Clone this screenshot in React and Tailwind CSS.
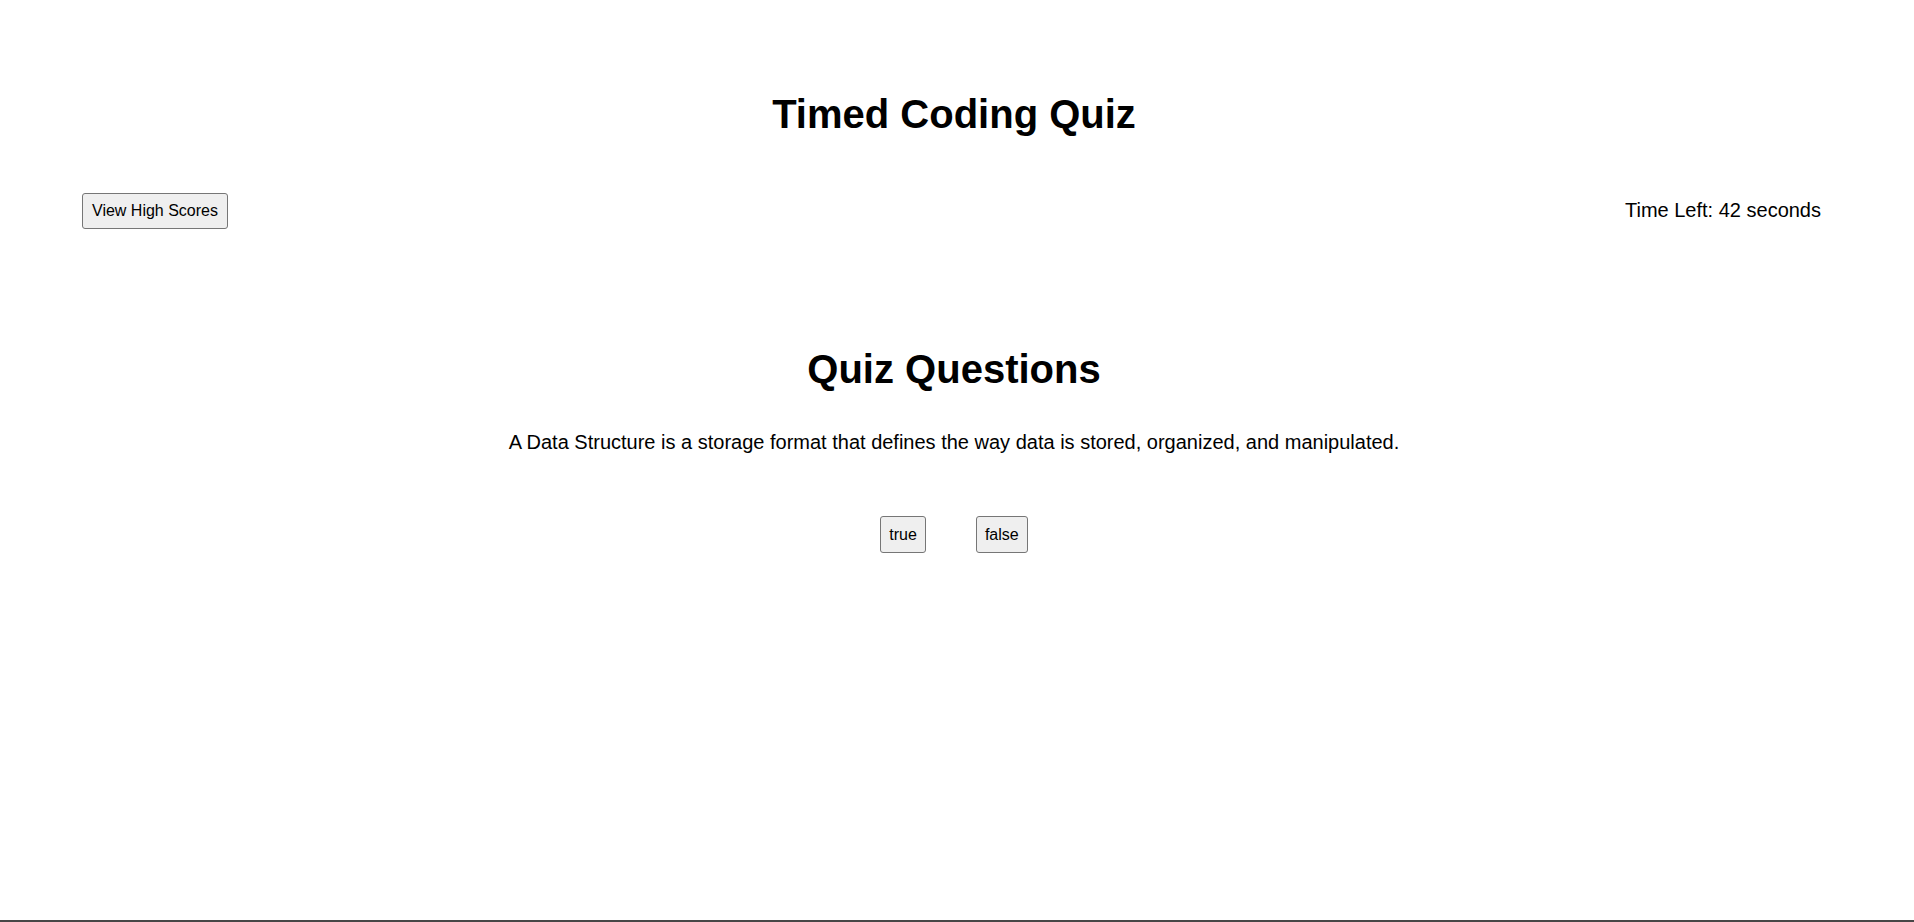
import React from "react";

export default function App() {
  const font = { fontFamily: '"Liberation Sans", Arial, sans-serif' };
  return (
    <div
      className="h-[922px] w-full flex flex-col bg-white text-black font-['Liberation_Sans',Arial,sans-serif]"
      style={font}
    >
      <div className="flex-1 flex flex-col pr-[6px]">
        <h1 className="mt-[91px] text-center text-[40px] leading-[46px] font-bold">
          Timed Coding Quiz
        </h1>
        <div className="mt-[56px] flex items-center justify-between pl-[82px] pr-[87px] h-[36px]">
          <button className="h-[36px] px-[9px] bg-[#efefef] border border-[#767676] rounded-[3px] text-[16px] leading-[18px] text-black">
            View High Scores
          </button>
          <div className="text-[20px] leading-[23px] -mt-[2px]">Time Left: 42 seconds</div>
        </div>
        <h2 className="mt-[117px] text-center text-[40px] leading-[46px] font-bold">
          Quiz Questions
        </h2>
        <p className="mt-[39px] text-center text-[20px] leading-[23px]">
          A Data Structure is a storage format that defines the way data is stored, organized, and manipulated.
        </p>
        <div className="mt-[62px] flex justify-center gap-[50px]">
          <button className="h-[37px] px-[8px] bg-[#efefef] border border-[#767676] rounded-[3px] text-[16px] leading-[18px] text-black">
            true
          </button>
          <button className="h-[37px] px-[8px] bg-[#efefef] border border-[#767676] rounded-[3px] text-[16px] leading-[18px] text-black">
            false
          </button>
        </div>
      </div>
      <div className="h-[2px] w-full bg-[#474747]" />
    </div>
  );
}
